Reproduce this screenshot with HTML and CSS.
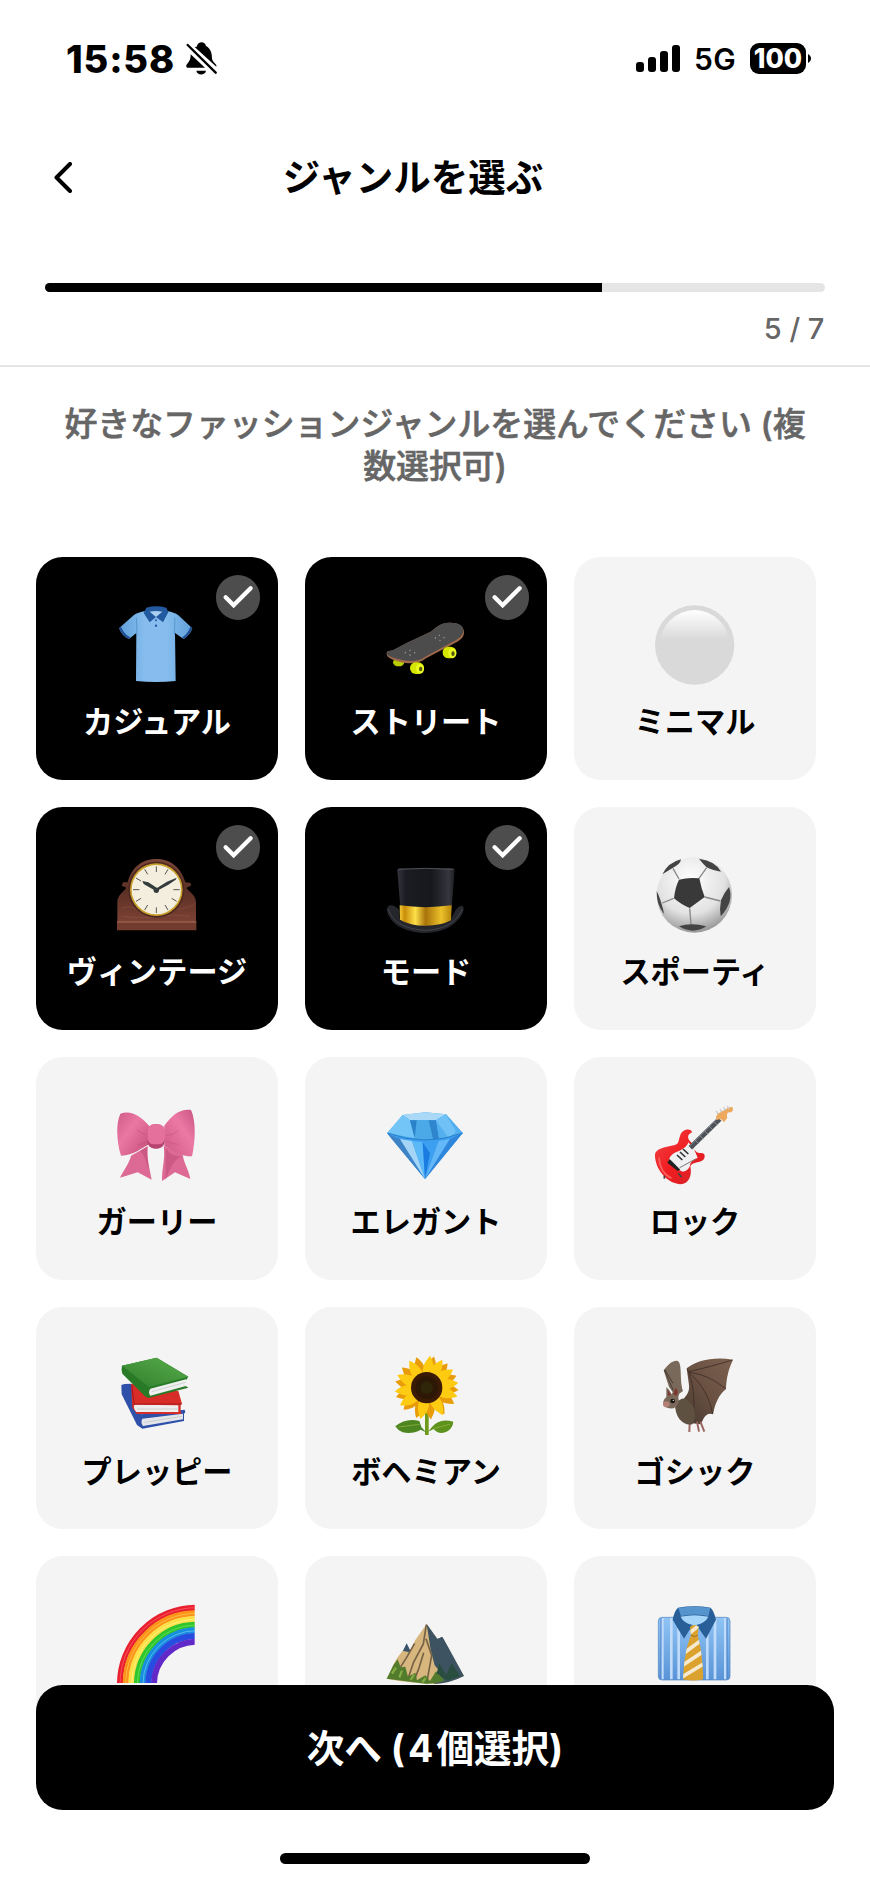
FILE: index.html
```
<!DOCTYPE html>
<html lang="ja">
<head>
<meta charset="utf-8">
<title>ジャンルを選ぶ</title>
<link rel="stylesheet" href="styles.css">
</head>
<body>
<svg width="0" height="0" class="defs">
  <defs>
    <symbol id="check" viewBox="0 0 134 134"><path d="M29 67L53 91L104 40" fill="none" stroke="#fff" stroke-width="13" stroke-linecap="round" stroke-linejoin="miter"/></symbol>
    <linearGradient id="cloth" x1="0" x2="1" y1="0" y2="0"><stop offset="0" stop-color="#5f9fd8"/><stop offset=".35" stop-color="#86bdee"/><stop offset=".65" stop-color="#86bdee"/><stop offset="1" stop-color="#5f9fd8"/></linearGradient>
    <linearGradient id="gloss" x1="0" x2="0" y1="0" y2="1"><stop offset="0" stop-color="#fff"/><stop offset=".42" stop-color="#d9d9d9"/><stop offset="1" stop-color="#d9d9d9"/></linearGradient>
    <linearGradient id="wood" x1="0" x2="0" y1="0" y2="1"><stop offset="0" stop-color="#7a4638"/><stop offset=".5" stop-color="#5c2f25"/><stop offset="1" stop-color="#7b4234"/></linearGradient>
    <linearGradient id="gold" x1="0" x2="1" y1="0" y2="0"><stop offset="0" stop-color="#f3c832"/><stop offset=".1" stop-color="#c88d08"/><stop offset=".3" stop-color="#ffe04a"/><stop offset=".5" stop-color="#a8730a"/><stop offset=".8" stop-color="#ecc02a"/><stop offset="1" stop-color="#b8860b"/></linearGradient>
    <linearGradient id="felt" x1="0" x2="1" y1="0" y2="0"><stop offset="0" stop-color="#34353c"/><stop offset=".15" stop-color="#1b1c22"/><stop offset=".6" stop-color="#17181d"/><stop offset=".9" stop-color="#36373e"/><stop offset="1" stop-color="#1b1c20"/></linearGradient>
    <radialGradient id="ball" cx=".45" cy=".3" r=".75"><stop offset="0" stop-color="#fff"/><stop offset=".6" stop-color="#e2e2e2"/><stop offset="1" stop-color="#8a8a8a"/></radialGradient>
    <linearGradient id="pinkL" x1="0" x2="1" y1="0" y2="1"><stop offset="0" stop-color="#cf5a86"/><stop offset=".4" stop-color="#ea77a2"/><stop offset="1" stop-color="#c34c78"/></linearGradient>
    <linearGradient id="pinkR" x1="1" x2="0" y1="0" y2="1"><stop offset="0" stop-color="#c85581"/><stop offset=".4" stop-color="#ec78a4"/><stop offset="1" stop-color="#ce5884"/></linearGradient>
    <linearGradient id="red" x1="0" x2="1" y1="0" y2="1"><stop offset="0" stop-color="#f2474a"/><stop offset=".5" stop-color="#f01c20"/><stop offset="1" stop-color="#d3242a"/></linearGradient>
    <linearGradient id="green" x1="0" x2="1" y1="1" y2="0"><stop offset="0" stop-color="#2f7f2c"/><stop offset="1" stop-color="#5aad4c"/></linearGradient>
    <linearGradient id="wing" x1="1" x2="0" y1="0" y2="1"><stop offset="0" stop-color="#7d6150"/><stop offset=".5" stop-color="#6a5142"/><stop offset="1" stop-color="#463830"/></linearGradient>
    <linearGradient id="stripe" x1="0" x2="0" y1="0" y2="1"><stop offset="0" stop-color="#8fc4f4"/><stop offset="1" stop-color="#5a94d8"/></linearGradient>
    <clipPath id="arc"><path d="M0 0H233V237H0z"/></clipPath>
    <clipPath id="tie"><path d="M105 68Q118 58 131 68L128 94Q142 140 145 226Q115 234 84 226Q88 140 108 94Z"/></clipPath>
    <path id="petal" d="M-15 -40C-20 -66 -8 -82 2 -96C14 -78 18 -62 15 -40Z"/>
  </defs>
</svg>
<div class="screen">
  <div class="status">
    <div class="status-left">
      <span class="clock">15:58</span>
      <svg class="bell" viewBox="0 0 93 99">
        <path d="M32 14C36 -3 57 -3 60 12C75 20 78 36 78 50C79 58 86 62 91 69L91 74L26 15ZM14 37L57 77L5 77C-1 77 0 68 4 65C12 57 14 50 14 37ZM31 86H60C58 101 33 101 31 86Z"/>
        <path d="M5 9L89 92" stroke="#000" stroke-width="7" stroke-linecap="round"/>
      </svg>
    </div>
    <div class="status-right">
      <div class="signal"><i class="b1"></i><i class="b2"></i><i class="b3"></i><i class="b4"></i></div>
      <span class="net">5G</span>
      <div class="battery"><span>100</span></div><svg class="nub" viewBox="0 0 3 9"><path d="M0 0C4 2 4 7 0 9Z"/></svg>
    </div>
  </div>
  <header class="header">
    <div class="nav">
      <svg class="back" viewBox="0 0 18 31"><path d="M16 2L2.5 15.5L16 29" fill="none" stroke="#000" stroke-width="4" stroke-linecap="round" stroke-linejoin="round"/></svg>
      <h1>ジャンルを選ぶ</h1>
    </div>
    <div class="track"><div class="fill"></div></div>
    <p class="step">5 / 7</p>
  </header>
  <main>
    <p class="lead">好きなファッションジャンルを選んでください (複<br>数選択可)</p>
    <div class="grid">
      <div class="card on"><span class="badge"><svg><use href="#check"/></svg></span>
        <svg class="emoji" viewBox="0 0 240 240">
          <path d="M85 18C70 22 58 23 50 31L6 70C13 86 22 97 36 102L58 84L57 228Q117 234 176 228L174 84L200 102C212 95 221 84 226 70L184 31C176 23 165 22 150 18Z" fill="url(#cloth)"/>
          <path d="M6 70C13 86 22 97 36 102L40 97C26 90 18 80 12 65ZM226 70C221 84 212 95 200 102L196 97C208 89 215 79 220 65Z" fill="#1f4f92"/>
          <path d="M58 38L60 90M174 38L172 90" stroke="#5a97cf" stroke-width="3"/>
          <path d="M88 8Q117 0 148 8L154 22L138 52L117 36L98 52L80 24Z" fill="#235a9f"/>
          <path d="M98 20Q117 16 136 20L117 36Z" fill="#a9d0ee"/>
          <circle cx="117" cy="46" r="3" fill="#235a9f"/><circle cx="117" cy="62" r="3.5" fill="#235a9f"/>
        </svg><b>カジュアル</b></div>
      <div class="card on"><span class="badge"><svg><use href="#check"/></svg></span>
        <svg class="emoji" viewBox="0 0 240 240">
          <ellipse cx="38" cy="172" rx="17" ry="12" fill="#b9cc00"/>
          <path d="M2 146C0 136 16 138 24 134L62 114L134 80C150 68 160 54 190 53C216 52 234 62 234 82C234 98 224 106 200 118L120 160C100 178 70 178 40 170C20 164 2 158 2 146Z" fill="#a06a4a"/>
          <path d="M2 145C2 136 16 138 24 134L62 114L134 80C150 68 160 54 190 53C216 52 233 60 232 77C231 92 220 100 198 112L118 155C98 170 70 171 40 163C20 158 4 154 2 145Z" fill="#4c4c4d"/>
          <g fill="#aaa"><circle cx="72" cy="136" r="2"/><circle cx="86" cy="143" r="2"/><circle cx="58" cy="143" r="2"/><circle cx="72" cy="150" r="2"/><circle cx="160" cy="91" r="2"/><circle cx="174" cy="98" r="2"/><circle cx="148" cy="99" r="2"/><circle cx="162" cy="106" r="2"/></g>
          <rect x="72" y="172" width="42" height="35" rx="17" fill="#d5e600"/><ellipse cx="102" cy="191" rx="12" ry="15" fill="#ecfa20"/><ellipse cx="104" cy="192" rx="5" ry="7" fill="#555b12"/>
          <rect x="170" y="125" width="41" height="35" rx="17" fill="#d5e600"/><ellipse cx="199" cy="145" rx="12" ry="15" fill="#ecfa20"/><ellipse cx="201" cy="146" rx="5" ry="7" fill="#555b12"/>
        </svg><b>ストリート</b></div>
      <div class="card">
        <svg class="emoji" viewBox="0 0 240 240"><circle cx="119" cy="120" r="119" fill="#d9d9d9"/><ellipse cx="119" cy="120" rx="104" ry="105" fill="url(#gloss)"/></svg><b>ミニマル</b></div>

      <div class="card on"><span class="badge"><svg><use href="#check"/></svg></span>
        <svg class="emoji" viewBox="0 0 240 240">
          <path d="M1 202V142C1 120 18 112 28 98L14 92L18 82L32 82C45 32 80 12 118 12C156 12 190 32 205 82L221 84L222 92L208 98C218 112 237 120 237 142V202Z" fill="url(#wood)"/>
          <path d="M0 200H238V226H0Z" fill="#713b2d"/><path d="M0 201H238" stroke="#a8705b" stroke-width="3"/>
          <path d="M12 160Q45 150 60 166M18 184Q80 192 125 184T220 184M185 164Q215 156 230 150" stroke="#96604b" stroke-width="2" fill="none" opacity=".6"/>
          <circle cx="118" cy="104" r="84" fill="#4d281f"/><circle cx="118" cy="104" r="79" fill="#c9a02c"/><circle cx="118" cy="104" r="74" fill="#f4eede"/>
          <g stroke="#555" stroke-width="3"><path d="M118 34v17M118 157v17M48 104h19M169 104h19M83 43l9 15M153 43l-9 15M83 165l9-15M153 165l-9-15M57 69l15 9M57 139l15-9M179 139l-15-9"/></g>
          <path d="M118 109L80 87L76 78L94 82L120 99L150 80L179 68L176 74L154 89Z" fill="#333b3c"/><circle cx="118" cy="106" r="8" fill="#333b3c"/>
        </svg><b>ヴィンテージ</b></div>
      <div class="card on"><span class="badge"><svg><use href="#check"/></svg></span>
        <svg class="emoji" viewBox="0 0 240 240">
          <path d="M4 158C8 146 28 150 40 166V190Q118 225 196 190C204 174 212 154 226 152C236 152 234 166 228 178C208 215 165 234 119 234C68 234 22 214 7 180C3 170 2 164 4 158Z" fill="#25262b"/>
          <path d="M7 162C20 205 65 224 119 226C172 224 212 204 229 162" fill="none" stroke="#44454d" stroke-width="3"/>
          <path d="M34 46Q34 40 44 40H196Q206 40 206 47L196 170H44Z" fill="url(#felt)"/>
          <path d="M37 43Q118 37 203 43" stroke="#50515a" stroke-width="3" fill="none"/>
          <path d="M41 151Q118 162 197 151L195 196Q165 212 119 212Q72 212 42 194Z" fill="url(#gold)"/>
        </svg><b>モード</b></div>
      <div class="card">
        <svg class="emoji" viewBox="0 0 240 240">
          <circle cx="118" cy="120" r="113" fill="url(#ball)"/>
          <path d="M72 72L54 40M132 70L155 38M149 126L196 138M104 160L108 208M56 130L22 144" stroke="#888" stroke-width="4"/>
          <path d="M72 74Q100 66 133 70Q138 98 149 126L104 159Q80 150 57 130Q60 98 72 74Z" fill="#39393a"/>
          <path d="M22 58Q40 22 78 13Q76 28 54 38ZM132 11Q182 18 198 50Q170 46 154 36Q142 24 132 11ZM5 108Q16 128 28 178Q4 150 5 108ZM222 96Q238 140 197 184Q193 162 198 136Q208 112 222 96ZM72 214Q108 202 154 214Q115 240 72 214Z" fill="#444"/>
        </svg><b>スポーティ</b></div>

      <div class="card">
        <svg class="emoji" viewBox="0 0 240 240">
          <path d="M42 152L92 124C89 160 98 192 104 224L62 202L9 218C22 192 37 174 42 152ZM140 122C146 160 134 190 135 228L174 202L220 222C216 196 202 178 197 150Z" fill="#dc6a94"/>
          <path d="M70 138L92 124C89 152 93 172 97 194C86 174 86 155 70 138ZM146 130Q168 160 196 152Q165 164 146 226Z" fill="#b94470" opacity=".45"/>
          <path d="M10 26C42 14 72 34 96 62V118C72 130 50 152 12 152C0 115 -5 60 10 26Z" fill="url(#pinkL)"/>
          <path d="M142 62C165 30 190 10 222 15C238 48 235 112 225 154C192 154 168 138 142 122Z" fill="url(#pinkR)"/>
          <path d="M60 74Q76 88 92 90M148 92Q170 90 184 76M62 120Q78 118 92 108M148 108Q166 118 184 118" fill="none" stroke="#ba4974" stroke-width="3" opacity=".45"/>
          <rect x="91" y="58" width="52" height="73" rx="22" fill="#b74470"/><rect x="91" y="58" width="53" height="60" rx="20" fill="#e4709b"/>
        </svg><b>ガーリー</b></div>
      <div class="card">
        <svg class="emoji" viewBox="0 0 240 240">
          <path d="M4 84L50 30L118 22L180 28L230 84L117 222Z" fill="#40a3ec"/>
          <path d="M50 30L118 22L180 28L150 46H72Z" fill="#a9d9f7"/>
          <path d="M4 84L50 30L72 46L64 96ZM64 96L72 46L90 100Z" fill="#72c5f6"/><path d="M72 46H150L160 106H90Z" fill="#4aa9e6"/><path d="M72 46H92L86 100Z" fill="#2a82c8"/><path d="M128 46H150L160 106H142Z" fill="#2f86cf"/>
          <path d="M150 46L160 106L230 84L180 28Z" fill="#54afef"/><path d="M150 46L188 100L210 80L180 28Z" fill="#6fc1f6"/>
          <path d="M4 84Q118 126 230 84L117 222Z" fill="#3d9ff0"/>
          <path d="M4 86L42 102L117 222Z" fill="#3e83c6"/><path d="M42 102L78 108L117 222Z" fill="#a4d5f7"/><path d="M78 108L110 112L117 222Z" fill="#5bb9f7"/><path d="M158 108L192 102L117 222Z" fill="#65b8f8"/><path d="M192 102L230 84L117 222Z" fill="#2f86db"/><path d="M110 112L132 145L117 222Z" fill="#1a7be0"/>
          <path d="M4 84Q118 126 230 84" fill="none" stroke="#287fcb" stroke-width="3"/>
        </svg><b>エレガント</b></div>
      <div class="card">
        <svg class="emoji" viewBox="0 0 240 240">
          <path d="M0 148C-2 185 30 233 75 238C100 238 112 215 106 184C115 166 150 178 149 152C148 138 130 150 122 138C112 134 120 122 108 112C94 98 98 88 111 82C110 70 84 70 76 90C68 112 74 116 56 121C28 127 2 132 0 148Z" fill="url(#red)"/>
          <path d="M100 112Q98 125 72 138Q46 146 42 164L70 194L84 200Q104 195 106 176Q110 166 128 158L116 130Z" fill="#f0f0f2"/>
          <path d="M106 128L194 42" stroke="#4c5258" stroke-width="15"/><path d="M104 124L190 38" stroke="#a2a5a8" stroke-width="1.5"/>
          <path d="M120 105l12 12M134 91l12 12M148 77l12 12M162 63l12 12M176 49l12 12" stroke="#aaa" stroke-width="2"/>
          <path d="M183 36L188 26L220 8Q236 2 234 12Q233 24 221 22Q213 26 217 38L207 52L198 42L184 45Z" fill="#eda85b"/>
          <path d="M184 18l5 10M195 12l5 10M206 7l5 10M217 3l5 10" stroke="#c8c8c8" stroke-width="4"/>
          <path d="M44 162L76 194L68 198L37 173Z" fill="#222"/><path d="M66 150l16 15M75 141l16 15M84 132l16 15" stroke="#333" stroke-width="5"/>
          <path d="M74 188L122 162" stroke="#777" stroke-width="3"/><path d="M28 212v9M70 205l10 12" stroke="#444" stroke-width="5"/><path d="M12 158Q15 205 50 220" stroke="#ff8a86" stroke-width="5" fill="none" opacity=".6"/>
        </svg><b>ロック</b></div>

      <div class="card">
        <svg class="emoji" viewBox="0 0 240 240">
          <path d="M13 90Q20 86 42 86L72 178L203 164L205 172L201 176V198L76 221L60 210L14 118Z" fill="#2f50a8"/><path d="M76 191L198 176V193L78 213Q70 202 76 191Z" fill="#e4e5ea"/>
          <path d="M42 86L184 108L195 146L191 150V172L194 177H60L46 158Z" fill="#d72c28"/><path d="M52 149L184 151V171H58Q48 160 52 149Z" fill="#eee"/><path d="M44 90L52 150M52 147H194" stroke="#a9171a" stroke-width="3"/>
          <path d="M15 32L119 8L214 65L207 76V94L214 98L94 129L84 124L16 56Q12 44 15 32Z" fill="#287a27"/>
          <path d="M15 32L119 8L214 65L96 96Z" fill="url(#green)"/><path d="M100 101L207 73V93L100 122Q92 112 100 101Z" fill="#eeefef"/><path d="M104 110L206 82M60 162H182M82 202L196 184" stroke="#c3c3c3" stroke-width="2"/>
        </svg><b>プレッピー</b></div>
      <div class="card">
        <svg class="emoji" viewBox="0 0 240 240">
          <path d="M117 174H128V240Q122 244 117 240Z" fill="#6f9918"/>
          <path d="M28 214Q60 188 100 198L106 216L120 232L104 224Q80 238 50 232Q35 226 28 214Z" fill="#4d8620"/><path d="M202 200Q160 188 138 216L126 230L143 222Q160 242 186 228Q200 218 202 200Z" fill="#5d921c"/>
          <path d="M38 216L100 208M145 220L192 208" stroke="#9ab944" stroke-width="2"/>
          <g transform="translate(122 98)">
            <g fill="#e99c09"><use href="#petal" transform="rotate(12)"/><use href="#petal" transform="rotate(40)"/><use href="#petal" transform="rotate(67)"/><use href="#petal" transform="rotate(93)"/><use href="#petal" transform="rotate(119)"/><use href="#petal" transform="rotate(145)"/><use href="#petal" transform="rotate(171)"/><use href="#petal" transform="rotate(198)"/><use href="#petal" transform="rotate(225)"/><use href="#petal" transform="rotate(252)"/><use href="#petal" transform="rotate(280)"/><use href="#petal" transform="rotate(308)"/><use href="#petal" transform="rotate(340)"/></g>
            <g fill="#fccb12"><use href="#petal" transform="rotate(5)"/><use href="#petal" transform="rotate(28)"/><use href="#petal" transform="rotate(54)"/><use href="#petal" transform="rotate(80)"/><use href="#petal" transform="rotate(105)"/><use href="#petal" transform="rotate(148)"/><use href="#petal" transform="rotate(190)"/><use href="#petal" transform="rotate(235)"/><use href="#petal" transform="rotate(262)"/><use href="#petal" transform="rotate(292)"/><use href="#petal" transform="rotate(326)"/></g>
            <circle r="47" fill="#3b1b06"/><circle r="34" fill="#2c1804"/><circle r="19" fill="#2f2508"/>
          </g>
        </svg><b>ボヘミアン</b></div>
      <div class="card">
        <svg class="emoji" viewBox="0 0 240 240">
          <path d="M26 46C36 32 50 16 66 17C84 22 72 70 84 108L62 124L42 96Z" fill="#79695a"/><path d="M28 45L62 122M30 44L54 85" stroke="#4c3d34" stroke-width="3"/>
          <path d="M95 40C125 15 180 4 234 14C220 44 214 70 213 102C192 118 180 146 174 178C154 170 146 188 138 208L105 204L84 134C96 120 104 110 102 90Z" fill="url(#wing)"/>
          <path d="M97 42C112 80 120 110 116 200M102 50C145 40 190 28 232 15M102 52C150 58 178 76 212 101M103 55C140 84 164 130 173 176" stroke="#3d2d25" stroke-width="2.5" fill="none"/>
          <path d="M104 205L103 231M126 200L132 230M136 200L148 230" stroke="#9b6660" stroke-width="6"/>
          <path d="M60 148C76 126 96 126 104 142C124 155 124 194 112 208C85 214 60 188 60 148Z" fill="#5f5142"/>
          <path d="M34 126L34 96Q44 104 50 118L62 94Q78 104 70 126Q76 150 56 160Q36 162 27 152Q20 138 34 126Z" fill="#7a685b"/>
          <path d="M38 104L47 120L40 122ZM62 99Q72 108 65 122L55 118Z" fill="#81332d"/><ellipse cx="34" cy="148" rx="10" ry="9" fill="#b58177"/><circle cx="53" cy="138" r="7" fill="#19120e"/><circle cx="55" cy="136" r="2" fill="#fff"/>
        </svg><b>ゴシック</b></div>

      <div class="card">
        <svg class="emoji" viewBox="0 0 240 240"><g clip-path="url(#arc)" fill="none" stroke-width="18">
          <circle cx="238" cy="240" r="229" stroke="#e9202f"/><circle cx="238" cy="240" r="212" stroke="#fb9418"/><circle cx="238" cy="240" r="195" stroke="#fde047"/><circle cx="238" cy="240" r="178" stroke="#2fc52c"/><circle cx="238" cy="240" r="161" stroke="#168fde"/><circle cx="238" cy="240" r="144" stroke="#274ce0"/><circle cx="238" cy="240" r="127" stroke="#6229c9"/>
          <g stroke-width="3"><circle cx="238" cy="240" r="229" stroke="#f8505a"/><circle cx="238" cy="240" r="212" stroke="#ffb746"/><circle cx="238" cy="240" r="194" stroke="#fff07c"/><circle cx="238" cy="240" r="177" stroke="#62dc58"/><circle cx="238" cy="240" r="160" stroke="#58b8ef"/></g>
        </g></svg></div>
      <div class="card">
        <svg class="emoji" viewBox="0 0 240 240">
          <path d="M46 150L62 118L78 150ZM150 108L168 98L188 140Z" fill="#38536a"/>
          <path d="M2 224C16 202 20 180 36 158L50 140L70 145L88 108L122 60L154 106L180 136L234 216C210 226 190 236 145 240C100 238 55 234 2 224Z" fill="#d8b77f"/>
          <path d="M122 60L154 104L170 100L188 132L234 216Q192 238 144 240L166 208L146 184L134 138Z" fill="#3d5361"/>
          <path d="M121 62L112 120L83 174L64 230M120 104L137 154L124 226M86 118L62 160L39 196M113 146L99 192L84 230" stroke="#766246" stroke-width="5" fill="none"/>
          <path d="M2 224L22 184L35 166L44 190L58 188L66 218L88 206L93 229L118 214L132 231L150 202L176 230Q148 240 120 239Z" fill="#527c2c"/>
          <path d="M18 209l12-18M40 220l8-20M74 228l10-16M109 235l10-13" stroke="#82ac43" stroke-width="7"/><path d="M152 208L160 178L180 214L197 178L222 216L185 230Z" fill="#294e40"/>
        </svg></div>
      <div class="card">
        <svg class="emoji" viewBox="0 0 240 240">
          <rect x="10" y="40" width="215" height="188" rx="11" fill="url(#stripe)" stroke="#4f83c0" stroke-width="2"/>
          <path d="M22 42V226M49 42V226M71 42V226M157 42V226M180 42V226M211 42V226" stroke="#c0dcfa" stroke-width="8"/><path d="M18 42V226M216 42V226" stroke="#4d80c7" stroke-width="3"/>
          <path d="M76 40Q118 22 162 40L119 78Z" fill="#a5d5f8"/>
          <path d="M69 11Q118 3 167 11Q177 21 183 47L153 104L124 63Q152 56 160 38Q118 29 77 38Q84 56 113 63L87 104L53 47Q58 20 69 11Z" fill="#285f99"/><path d="M70 12Q118 5 166 12L160 36Q118 27 78 36Z" fill="#5594cd"/>
          <g clip-path="url(#tie)"><path d="M80 55H150V235H80Z" fill="#dba32e"/><path d="M98 92L136 61M82 151L144 105M78 187L150 139M74 223L150 177" stroke="#f5ead0" stroke-width="11"/><path d="M108 94Q119 102 129 93" stroke="#9a6e24" stroke-width="3" fill="none"/></g>
        </svg></div>
    </div>
  </main>
  <button class="next">次へ <span>(4</span>個選択)</button>
  <div class="home"></div>
</div>
</body>
</html>
```
FILE: styles.css
```
* { box-sizing: border-box; margin: 0; padding: 0; }
body { background: #fff; color: #000; font-family: Inter, "Noto Sans CJK JP", sans-serif; }
.defs { position: absolute; }
.screen { position: relative; width: 870px; height: 1882px; overflow: hidden; background: #fff; }

.status { display: flex; justify-content: space-between; align-items: center; height: 116px; padding: 0 59px 0 66px; }
.status-left, .status-right { display: flex; align-items: center; }
.clock { font-size: 38px; font-weight: 800; line-height: 40px; letter-spacing: .8px; width: 120px; padding-top: 1px; white-space: nowrap; }
.bell { width: 31px; height: 33px; }
.signal { display: flex; align-items: flex-end; gap: 4px; height: 28px; width: 59px; }
.signal i { width: 8px; border-radius: 3px; background: #000; }
.b1 { height: 10px; } .b2 { height: 15px; } .b3 { height: 21px; } .b4 { height: 27px; }
.net { width: 56px; margin-left: -1px; padding-top: 2px; font-size: 30px; font-weight: 600; line-height: 36px; letter-spacing: .4px; white-space: nowrap; }
.battery { width: 56px; height: 31px; border-radius: 9px; background: #000; color: #fff; display: flex; justify-content: center; align-items: center; font-size: 26.5px; font-weight: 800; line-height: 31px; }
.nub { width: 3px; height: 9px; margin-left: 2px; }

.header { height: 250.6px; padding: 30px 44.6px 0; border-bottom: 2.2px solid #e5e5e5; }
.nav { display: grid; grid-template-columns: 60px 1fr 104px; align-items: center; height: 60px; }
.back { width: 18px; height: 31px; margin-left: 9px; }
h1 { font-size: 37.5px; font-weight: 700; line-height: 60px; text-align: center; white-space: nowrap; padding-top: 2px; }
.track { margin-top: 77px; height: 9px; border-radius: 5px; background: #e5e5e5; overflow: hidden; }
.fill { width: 71.43%; height: 100%; background: #000; }
.step { margin-top: 19px; padding-right: 1px; font-size: 29px; font-weight: 550; line-height: 36px; color: #666; text-align: right; }

.lead { margin-top: 36px; height: 154.9px; font-size: 32.9px; font-weight: 500; line-height: 42px; color: #666; -webkit-text-stroke: .6px #666; text-align: center; white-space: nowrap; }
.grid { display: grid; grid-template-columns: repeat(3, 242px); gap: 26.8px 27px; padding-left: 36px; }
.card { position: relative; display: flex; flex-direction: column; align-items: center; height: 222.9px; padding-top: 48px; border-radius: 26.8px; background: #f4f4f4; }
.card.on { background: #000; color: #fff; }
.badge { position: absolute; top: 17.8px; right: 17.8px; width: 44.6px; height: 44.6px; border-radius: 50%; background: #4d4d4d; }
.badge svg { display: block; width: 100%; height: 100%; }
.emoji { width: 80px; height: 80px; flex: none; }
.card b { margin-top: 17px; font-size: 30.2px; font-weight: 700; line-height: 40px; white-space: nowrap; }

.next { position: absolute; left: 36px; right: 36px; top: 1685px; height: 125.3px; padding-top: 3px; border: 0; border-radius: 26.8px; background: #000; color: #fff; font: 700 37.6px/1 Inter, "Noto Sans CJK JP", sans-serif; }
.next span { letter-spacing: 3px; }
.home { position: absolute; left: 280px; top: 1853px; width: 310px; height: 10.7px; border-radius: 6px; background: #000; }
```
